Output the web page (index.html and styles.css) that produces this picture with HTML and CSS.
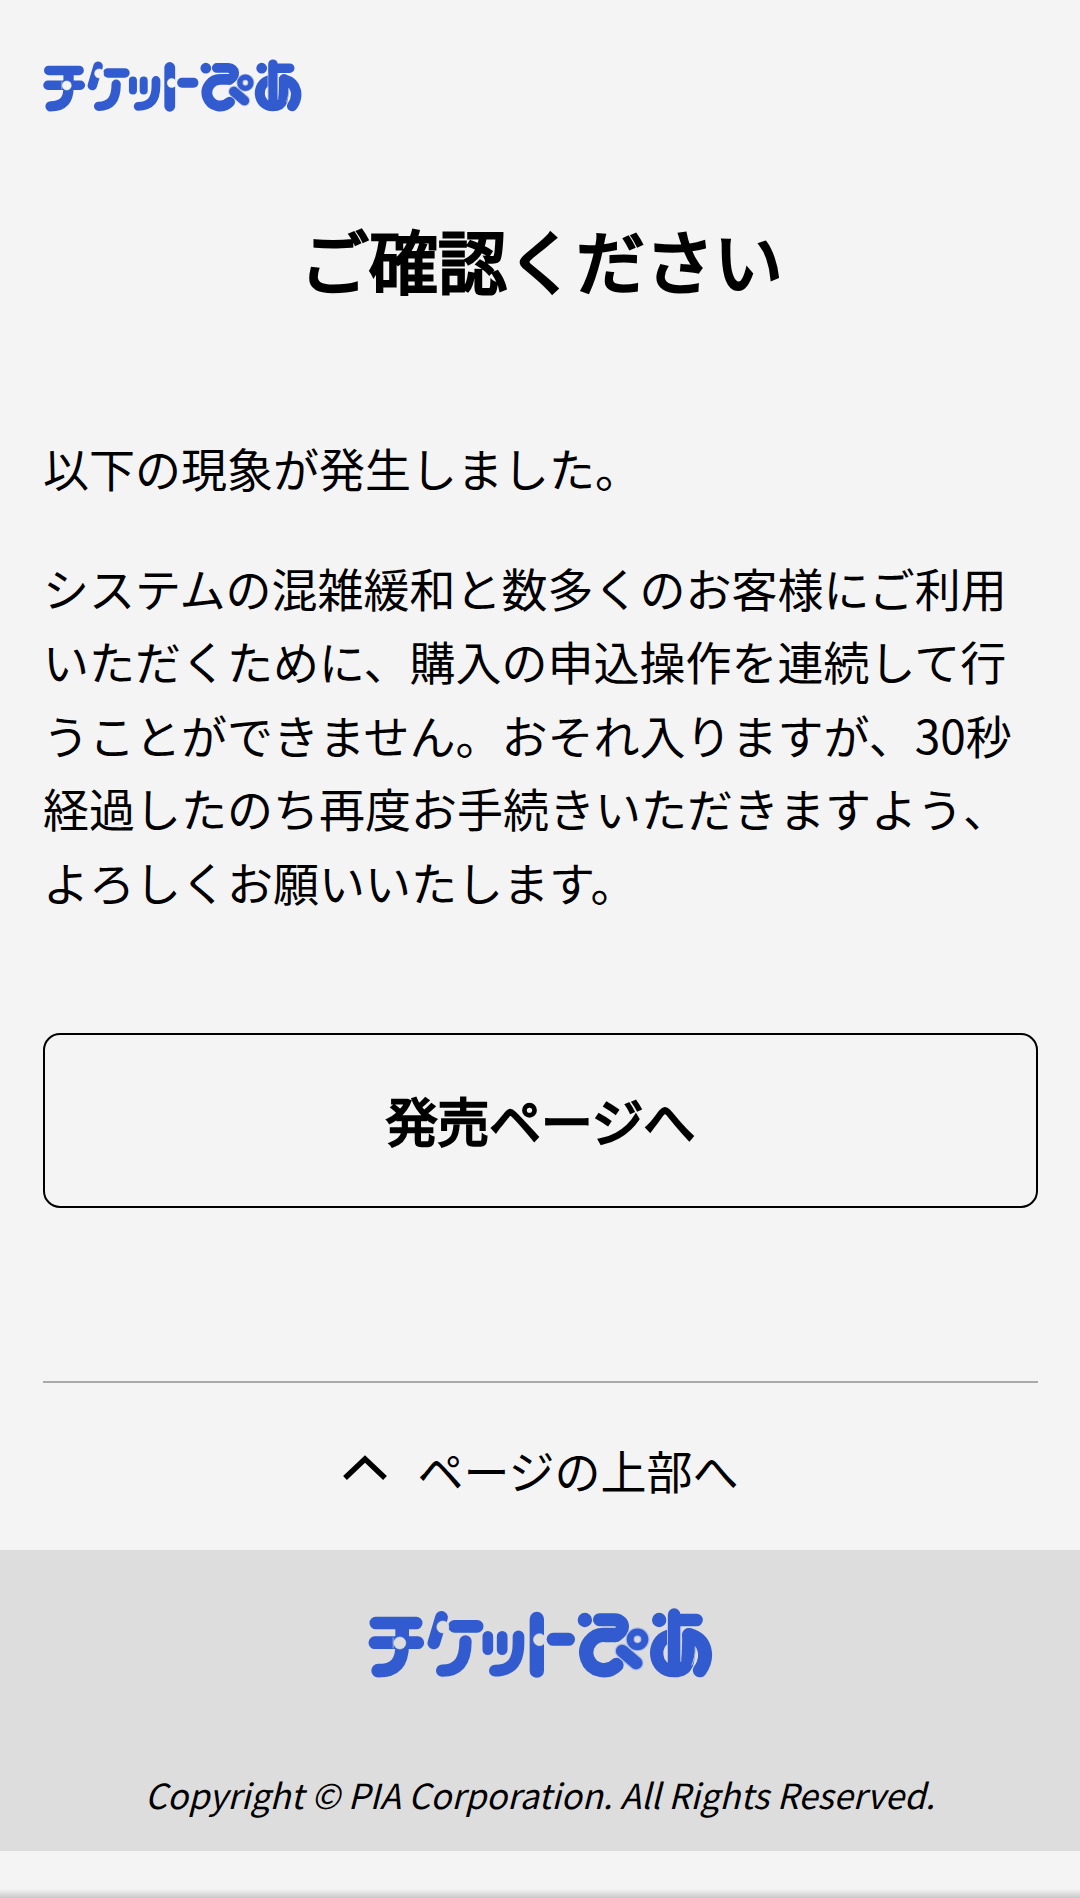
FILE: index.html
```html
<!DOCTYPE html>
<html lang="ja">
<head>
<meta charset="utf-8">
<title>チケットぴあ</title>
<link rel="stylesheet" href="styles.css">
</head>
<body>
<svg class="defs" aria-hidden="true">
  <symbol id="logo" viewBox="25 55 1034 210">
    <g class="ink">
      <path stroke-width="38" d="M48 100H169M45 159H174"/>
      <path stroke-width="41" d="M127 110V165C127 217 108 243 55 243"/>
      <path stroke-width="38" d="M245 83L222 160M284 110H352"/>
      <path stroke-width="37" d="M317 155C317 207 300 243 247 243"/>
      <path stroke-width="32" d="M384 140V180M427 140V180"/>
      <path stroke-width="35" d="M476 140V160C476 215 455 243 405 243"/>
      <path stroke-width="43" d="M531 88V243"/>
      <path stroke-width="39" d="M580 149H626"/>
      <path stroke-width="43" d="M675 91h.1M898 91h.1"/>
      <path stroke-width="39" d="M719 90H764C795 92 796 124 768 137"/>
      <path stroke-width="43" d="M768 136H738A53 53 0 1 0 770 226"/>
      <path stroke-width="40" d="M925 140C875 155 878 243 943 243C985 243 987 220 987 135"/>
      <path stroke-width="42" d="M988 136C1042 150 1046 206 1020 242"/>
      <path stroke-width="38" d="M943 75V240M943 91H1010"/>
    </g>
    <g class="gap">
      <path stroke-width="3" d="M923 112V215M963 112V215M1006 172C1008 192 1002 212 996 226"/>
      <path stroke-width="45" d="M787 184L829 220"/>
      <circle stroke-width="28" cx="833" cy="149" r="22"/>
    </g>
    <g class="ink">
      <path stroke-width="38" d="M787 184L829 220"/>
      <circle stroke-width="21" cx="833" cy="149" r="22"/>
    </g>
    <g class="notch"><circle cx="120" cy="160" r="18"/><path d="M100 143V176"/><circle cx="249" cy="112" r="18"/><circle cx="539" cy="150" r="18"/></g>
  </symbol>
</svg>
<header class="header"><svg class="header-logo" role="img" aria-label="チケットぴあ"><use href="#logo"/></svg></header>
<main class="main">
  <h1 class="title">ご確認ください</h1>
  <p class="text">以下の現象が発生しました。</p>
  <p class="text">システムの混雑緩和と数多くのお客様にご利用いただくために、購入の申込操作を連続して行うことができません。おそれ入りますが、30秒経過したのち再度お手続きいただきますよう、よろしくお願いいたします。</p>
  <a class="button">発売ページへ</a>
  <a class="to-top"><svg class="chevron" viewBox="0 0 46 28"><path d="M3 24L23 5L43 24"/></svg>ページの上部へ</a>
</main>
<footer class="footer">
  <svg class="footer-logo" role="img" aria-label="チケットぴあ"><use href="#logo"/></svg>
  <address class="copyright">Copyright © PIA Corporation. All Rights Reserved.</address>
</footer>
<div class="page-end"></div>
</body>
</html>
```
FILE: styles.css
```css
* { box-sizing: border-box; }
body {
  --page: #f4f4f4;
  margin: 0;
  min-height: 1898px;
  display: flex;
  flex-direction: column;
  background: var(--page);
  color: #000;
  font: 46px/73.6px "Noto Sans CJK JP", sans-serif;
}
.defs { position: absolute; width: 0; height: 0; }
.ink { fill: none; stroke: #315bce; stroke-linecap: round; stroke-linejoin: round; }
.gap { fill: none; stroke: #b0bfe9; stroke-linecap: round; }
.notch { fill: var(--page); stroke: var(--page); stroke-width: 2; }
.header { height: 170px; padding: 59px 43px 0; }
.header-logo { display: block; width: 259px; height: 53px; }
.main { padding: 0 42px 0 43px; height: 1380px; display: flex; flex-direction: column; }
.title {
  margin: 38px 0 121px;
  font-size: 69px;
  line-height: 102px;
  text-align: center;
  font-weight: 400;
  text-indent: 2px;
  -webkit-text-stroke: 3px #000;
}
.text { margin: 0 0 46px; line-break: strict; }
.button {
  margin-top: 68px;
  height: 175px;
  padding-bottom: 1px;
  border: 2px solid #000;
  border-radius: 17px;
  display: flex;
  align-items: center;
  justify-content: center;
  font-size: 51.75px;
  font-weight: 400;
  -webkit-text-stroke: 2.3px #000;
}
.to-top {
  margin-top: 173px;
  border-top: 2px solid #aaa;
  flex: 1;
  padding-top: 50px;
  display: flex;
  align-items: flex-start;
  justify-content: center;
  gap: 29px;
}
.chevron { width: 46px; height: 28px; margin-top: 21px; fill: none; stroke: #000; stroke-width: 5.5; stroke-linecap: butt; }
.footer {
  --page: #ddd;
  height: 301px;
  padding-top: 58px;
  background: #ddd;
  display: flex;
  flex-direction: column;
  align-items: center;
}
.footer-logo { width: 345px; height: 70px; }
.copyright { margin-top: 87px; font-size: 34.5px; line-height: 58px; font-style: italic; white-space: nowrap; }
.page-end { flex: 1; background: linear-gradient(to top, #c8c8c8, #f4f4f4 9px); }
```
